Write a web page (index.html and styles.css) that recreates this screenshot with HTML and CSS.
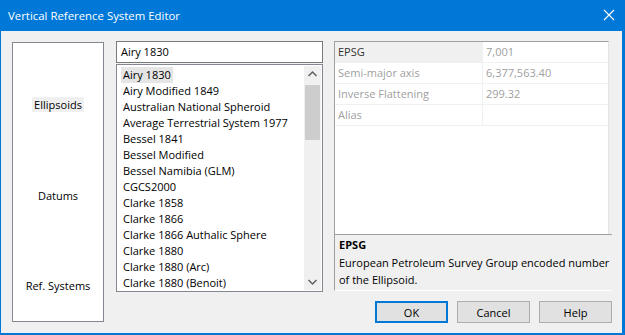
FILE: index.html
```html
<!DOCTYPE html>
<html lang="en">
<head>
  <title>Vertical Reference System Editor</title>
  <link rel="stylesheet" href="styles.css">
</head>
<body>
  <div class="window">
    <div class="titlebar">
      <span class="title">Vertical Reference System Editor</span>
      <svg class="close" width="12" height="12" viewBox="0 0 12 12">
        <path d="M1 1 L11 11 M11 1 L1 11" stroke="#fff" stroke-width="1.1" fill="none"/>
      </svg>
    </div>

    <div class="client">
      <div class="nav">
        <div class="nav-item"><span class="active">Ellipsoids</span></div>
        <div class="nav-item"><span>Datums</span></div>
        <div class="nav-item"><span>Ref. Systems</span></div>
      </div>

      <div class="middle">
        <div class="textbox">Airy 1830</div>
        <div class="listbox">
          <ul class="items">
            <li><span class="selected">Airy 1830</span></li>
            <li>Airy Modified 1849</li>
            <li>Australian National Spheroid</li>
            <li>Average Terrestrial System 1977</li>
            <li>Bessel 1841</li>
            <li>Bessel Modified</li>
            <li>Bessel Namibia (GLM)</li>
            <li>CGCS2000</li>
            <li>Clarke 1858</li>
            <li>Clarke 1866</li>
            <li>Clarke 1866 Authalic Sphere</li>
            <li>Clarke 1880</li>
            <li>Clarke 1880 (Arc)</li>
            <li>Clarke 1880 (Benoit)</li>
          </ul>
          <div class="scrollbar">
            <svg class="arrow" width="17" height="17" viewBox="0 0 17 17">
              <path d="M4.5 10 L8.5 6 L12.5 10" stroke="#606060" stroke-width="1.5" fill="none"/>
            </svg>
            <div class="track"><div class="thumb"></div></div>
            <svg class="arrow" width="17" height="17" viewBox="0 0 17 17">
              <path d="M4.5 7 L8.5 11 L12.5 7" stroke="#606060" stroke-width="1.5" fill="none"/>
            </svg>
          </div>
        </div>
      </div>

      <div class="right">
        <div class="grid">
          <div class="row">
            <div class="name current">EPSG</div>
            <div class="value">7,001</div>
          </div>
          <div class="row">
            <div class="name">Semi-major axis</div>
            <div class="value">6,377,563.40</div>
          </div>
          <div class="row">
            <div class="name">Inverse Flattening</div>
            <div class="value">299.32</div>
          </div>
          <div class="row">
            <div class="name">Alias</div>
            <div class="value"></div>
          </div>
        </div>
        <div class="description">
          <div class="desc-title">EPSG</div>
          <div class="desc-text">European Petroleum Survey Group encoded number of the Ellipsoid.</div>
        </div>
        <div class="buttons">
          <button class="default">OK</button>
          <button>Cancel</button>
          <button>Help</button>
        </div>
      </div>
    </div>
  </div>
</body>
</html>
```

FILE: styles.css
```css
html, body {
  margin: 0;
  padding: 0;
  font-family: 'Segoe UI', 'Open Sans', sans-serif;
  font-size: 11px;
  color: #000;
}

.window {
  width: 625px;
  height: 335px;
  box-sizing: border-box;
  background: #f0f0f0;
  border: 1px solid #0078d7;
  border-top: none;
  border-right-width: 3px;
  border-bottom-width: 2px;
  display: flex;
  flex-direction: column;
}

.titlebar {
  height: 31px;
  background: #0078d7;
  color: #fff;
  display: flex;
  align-items: center;
  justify-content: space-between;
  padding: 0 10px 0 8px;
  margin: 0 -3px 0 -1px;
  font-size: 11.4px;
  flex-shrink: 0;
}

.close {
  margin-top: -1px;
}

.client {
  display: flex;
  padding: 10px 0 0 11px;
  flex: 1;
}

/* left navigation */
.nav {
  width: 92px;
  height: 280px;
  margin-top: 1px;
  box-sizing: border-box;
  background: #fff;
  border: 1px solid #828790;
  display: flex;
  flex-direction: column;
  justify-content: space-between;
  align-items: center;
  padding: 54px 0 28px 0;
}

.nav-item span {
  display: inline-block;
  padding: 0 2px;
  line-height: 15px;
}

.nav-item span.active {
  background: #f0f0f0;
}

/* middle column */
.middle {
  width: 207px;
  margin-left: 12px;
  display: flex;
  flex-direction: column;
}

.textbox {
  height: 22px;
  box-sizing: border-box;
  background: #fff;
  border: 1px solid #7a7a7a;
  padding: 0 0 0 4px;
  line-height: 20px;
}

.listbox {
  height: 228px;
  margin-top: 1px;
  box-sizing: border-box;
  background: #fff;
  border: 1px solid #828790;
  display: flex;
  overflow: hidden;
}

.items {
  list-style: none;
  margin: 0;
  padding: 2px 0 0 4px;
  flex: 1;
  overflow: hidden;
}

.items li {
  height: 16px;
  line-height: 16px;
  white-space: nowrap;
  padding-left: 2px;
}

.items li .selected {
  background: #e5e5e5;
  margin-left: -2px;
  padding: 0 2px;
  display: inline-block;
}

.scrollbar {
  width: 17px;
  margin: 1px 1px 1px 0;
  background: #f0f0f0;
  display: flex;
  flex-direction: column;
}

.track {
  flex: 1;
  padding: 2px 1px;
}

.thumb {
  height: 55px;
  background: #cdcdcd;
}

/* right column */
.right {
  width: 278px;
  margin-left: 11px;
  display: flex;
  flex-direction: column;
}

.grid {
  width: 275px;
  height: 193px;
  box-sizing: border-box;
  background: #fff;
  border-top: 1px solid #a0a0a0;
  border-left: 1px solid #a0a0a0;
  border-right: 1px solid #e3e3e3;
}

.row {
  display: flex;
  height: 21px;
  box-sizing: border-box;
  border-bottom: 1px solid #f0f0f0;
  color: #a0a0a0;
}

.row .name {
  width: 148px;
  box-sizing: border-box;
  border-right: 1px solid #f0f0f0;
  padding-left: 3px;
  line-height: 20px;
}

.row .name.current {
  background: #f0f0f0;
  color: #333;
}

.row .value {
  flex: 1;
  padding-left: 3px;
  line-height: 20px;
}

.description {
  width: 278px;
  height: 57px;
  box-sizing: border-box;
  border-top: 1px solid #a0a0a0;
  border-left: 1px solid #a0a0a0;
  border-bottom: 1px solid #fff;
  padding: 2px 0 0 4px;
  overflow: hidden;
}

.desc-title {
  font-weight: bold;
  line-height: 16px;
}

.desc-text {
  line-height: 17px;
  margin-top: 1px;
  width: 283px;
}

.buttons {
  display: flex;
  justify-content: flex-end;
  gap: 9px;
  margin-top: 10px;
}

.buttons button {
  width: 73px;
  height: 22px;
  box-sizing: border-box;
  background: #e1e1e1;
  border: 1px solid #adadad;
  font-family: inherit;
  font-size: 11px;
  padding: 0;
  color: #000;
}

.buttons button.default {
  border: 2px solid #0078d7;
}
```
